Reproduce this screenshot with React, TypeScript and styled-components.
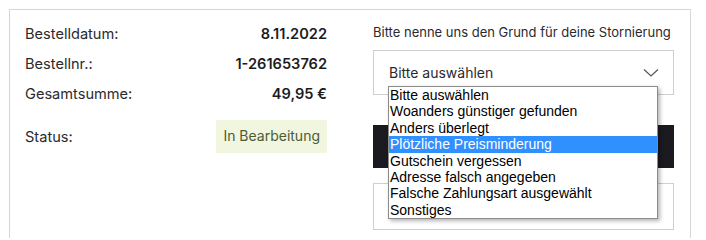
import React from 'react'
import styled, { createGlobalStyle } from 'styled-components'

const GlobalStyle = createGlobalStyle`
  body {
    margin: 0;
    background: #ffffff;
    font-family: Inter, 'Noto Sans', sans-serif;
    color: #1c1c1f;
  }
`

const Page = styled.div`
  padding: 9px 0 0 9px;
  height: 238px;
  overflow: hidden;
  box-sizing: border-box;
`

const Card = styled.div`
  width: 682px;
  height: 260px;
  box-sizing: border-box;
  border: 1px solid #d6d6d6;
  padding: 0 15px;
  display: grid;
  grid-template-columns: 302px 301px;
  column-gap: 46px;
`

const Summary = styled.div`
  padding-top: 14px;
  display: flex;
  flex-direction: column;
`

const Row = styled.div<{ $status?: boolean }>`
  display: flex;
  justify-content: space-between;
  align-items: center;
  line-height: 20px;
  font-size: 14.6px;
  margin-bottom: 10px;
  margin-top: ${(p) => (p.$status ? '6px' : '0')};
`

const Label = styled.span`
  color: #2a2a2e;
`

const Value = styled.span`
  font-weight: 600;
  color: #1c1c1f;
`

const Badge = styled.span`
  background: #f0f6df;
  color: #4f5b34;
  font-size: 14px;
  padding: 6px 7px 7px;
  line-height: 20px;
`

const Cancel = styled.div`
  padding-top: 12px;
  display: flex;
  flex-direction: column;
`

const Title = styled.div`
  font-size: 13px;
  line-height: 20px;
  color: #2a2a2e;
  white-space: nowrap;
`

const SelectWrap = styled.div`
  position: relative;
  margin-top: 8px;
`

const SelectBox = styled.div`
  height: 45px;
  box-sizing: border-box;
  border: 1px solid #cfcfcf;
  display: flex;
  align-items: center;
  justify-content: space-between;
  padding: 0 14px 0 15px;
  font-size: 14px;
  color: #2a2a2e;
`

const Chevron = styled.svg`
  width: 16px;
  height: 10px;
`

const OptionList = styled.ul`
  position: absolute;
  left: 15px;
  top: 36px;
  width: 270px;
  margin: 0;
  padding: 0;
  list-style: none;
  box-sizing: border-box;
  background: #ffffff;
  border: 1px solid #8c8c8c;
  box-shadow: 2px 2px 4px rgba(0, 0, 0, 0.3);
  font-family: 'Liberation Sans', Arial, sans-serif;
  font-size: 14px;
  z-index: 10;
`

const Option = styled.li<{ $active?: boolean }>`
  height: 16.4px;
  line-height: 16px;
  padding-left: 1px;
  white-space: nowrap;
  color: ${(p) => (p.$active ? '#ffffff' : '#000000')};
  background: ${(p) => (p.$active ? '#3090ff' : 'transparent')};
`

const SubmitButton = styled.button`
  margin-top: 30px;
  height: 43px;
  border: none;
  background: #1b1a20;
`

const Comment = styled.div`
  margin-top: 15px;
  height: 47px;
  box-sizing: border-box;
  border: 1px solid #cfcfcf;
`

const reasons = [
  'Bitte auswählen',
  'Woanders günstiger gefunden',
  'Anders überlegt',
  'Plötzliche Preisminderung',
  'Gutschein vergessen',
  'Adresse falsch angegeben',
  'Falsche Zahlungsart ausgewählt',
  'Sonstiges',
]

export default function App() {
  return (
    <Page>
      <GlobalStyle />
      <Card>
        <Summary>
          <Row>
            <Label>Bestelldatum:</Label>
            <Value>8.11.2022</Value>
          </Row>
          <Row>
            <Label>Bestellnr.:</Label>
            <Value>1-261653762</Value>
          </Row>
          <Row>
            <Label>Gesamtsumme:</Label>
            <Value>49,95 €</Value>
          </Row>
          <Row $status>
            <Label>Status:</Label>
            <Badge>In Bearbeitung</Badge>
          </Row>
        </Summary>
        <Cancel>
          <Title>Bitte nenne uns den Grund für deine Stornierung</Title>
          <SelectWrap>
            <SelectBox>
              <span>Bitte auswählen</span>
              <Chevron viewBox="0 0 16 10">
                <path d="M1 1.5 L8 8 L15 1.5" fill="none" stroke="#555" strokeWidth="1.2" />
              </Chevron>
            </SelectBox>
            <OptionList>
              {reasons.map((r, i) => (
                <Option key={r} $active={i === 3}>
                  {r}
                </Option>
              ))}
            </OptionList>
          </SelectWrap>
          <SubmitButton aria-label="Stornieren" />
          <Comment />
        </Cancel>
      </Card>
    </Page>
  )
}
